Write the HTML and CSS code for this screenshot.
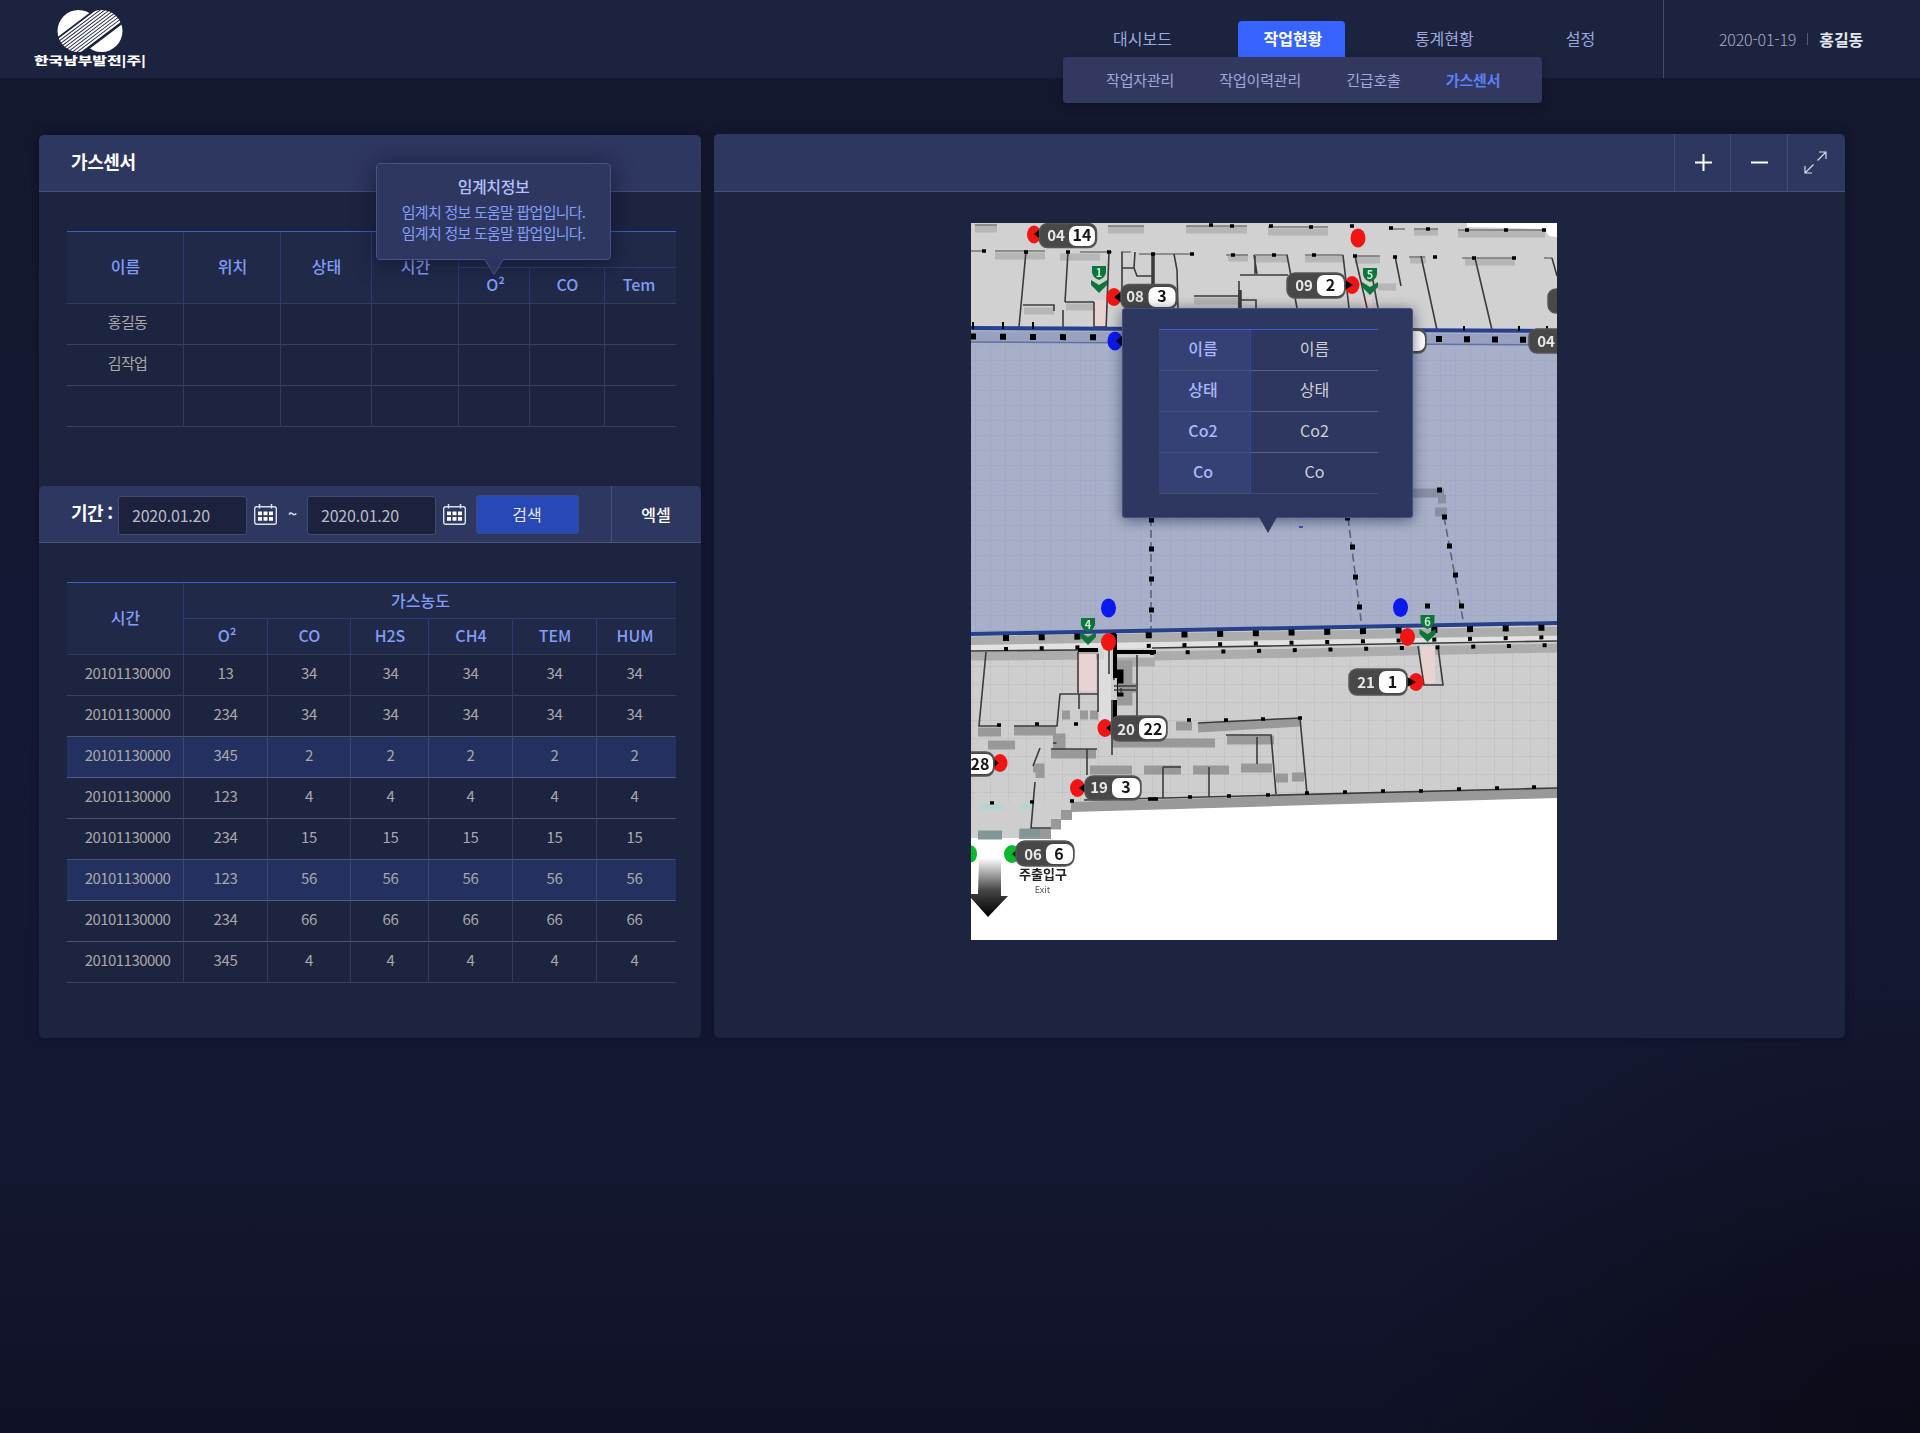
FILE: index.html
```html
<!DOCTYPE html>
<html lang="ko">
<head>
<meta charset="utf-8">
<title>가스센서</title>
<link rel="stylesheet" href="styles.css">
</head>
<body>
<header class="topbar">
  <svg class="logo" width="116" height="62" viewBox="32 8 116 62">
    <defs>
      <clipPath id="discs"><circle cx="78.500" cy="31" r="21"/><circle cx="101.500" cy="31" r="21"/></clipPath>
      <clipPath id="left-disc"><circle cx="78.500" cy="31" r="21"/></clipPath>
      <clipPath id="right-disc"><circle cx="101.500" cy="31" r="21"/></clipPath>
    </defs>
    <path clip-path="url(#left-disc)" fill="#fff" d="M55 39 92 11V5H50z"/>
    <path clip-path="url(#right-disc)" fill="#fff" d="M88 50 125 22V60H88z"/>
    <g clip-path="url(#discs)" stroke="#fff" stroke-width="1.9">
      <path d="M50 46.200 130 -14.300M50 49.700 130 -10.800M50 53.200 130 -7.300M50 56.700 130 -3.800M50 60.200 130 -.3M50 63.700 130 3.200M50 67.200 130 6.700M50 70.700 130 10.200M50 74.200 130 13.700"/>
    </g>
    <text class="logo-text" transform="translate(34 65) scale(1 .88)" textLength="112" lengthAdjust="spacingAndGlyphs">한국남부발전|주|</text>
  </svg>
  <nav class="nav">
    <a class="nav-item">대시보드</a>
    <a class="nav-item nav-active">작업현황</a>
    <a class="nav-item nav-stats">통계현황</a>
    <a class="nav-item">설정</a>
  </nav>
  <div class="user"><span class="date">2020-01-19</span><i class="user-bar"></i><b class="user-name">홍길동</b></div>
  <div class="submenu"><a>작업자관리</a><a>작업이력관리</a><a>긴급호출</a><a class="submenu-active">가스센서</a></div>
</header>

<main class="main">
  <section class="panel sensors">
    <div class="bar"><h2 class="bar-title">가스센서</h2></div>
    <div class="status-area">
      <table class="grid">
        <colgroup><col class="w117"><col class="w97"><col class="w91"><col class="w87"><col class="w71"><col class="w75"><col class="w71"></colgroup>
        <thead>
          <tr><th rowspan="2">이름</th><th rowspan="2">위치</th><th rowspan="2">상태</th><th rowspan="2">시간</th><th colspan="3"></th></tr>
          <tr><th>O²</th><th>CO</th><th>Tem</th></tr>
        </thead>
        <tbody>
          <tr><td class="who">홍길동</td><td></td><td></td><td></td><td></td><td></td><td></td></tr>
          <tr><td class="who">김작업</td><td></td><td></td><td></td><td></td><td></td><td></td></tr>
          <tr><td></td><td></td><td></td><td></td><td></td><td></td><td></td></tr>
        </tbody>
      </table>
    </div>
    <div class="bar filter">
      <span class="filter-label">기간 :</span>
      <div class="date-input">2020.01.20</div>
      <svg class="cal" width="23" height="21" viewBox="0 0 23 21"><use href="#calendar"/></svg>
      <span class="tilde">~</span>
      <div class="date-input">2020.01.20</div>
      <svg class="cal" width="23" height="21" viewBox="0 0 23 21">
        <g id="calendar"><rect x=".7" y="2.700" width="21.600" height="17.600" rx="2" fill="none" stroke="#dde0ee" stroke-width="1.400"/><path d="M5.500 0v4.500M17.500 0v4.500" stroke="#dde0ee" stroke-width="1.500"/><path fill="#fff" d="M4 7.500h4v3.700H4zM9.500 7.500h4v3.700h-4zM15 7.500h4v3.700h-4zM4 13h4v3.700H4zM9.500 13h4v3.700h-4zM15 13h4v3.700h-4z"/></g>
      </svg>
      <button class="search">검색</button>
      <a class="excel">엑셀</a>
    </div>
    <div class="history-area">
      <table class="grid">
        <colgroup><col class="w117"><col class="w84"><col class="w83"><col class="w78"><col class="w84"><col class="w84"><col class="w79"></colgroup>
        <thead>
          <tr><th rowspan="2">시간</th><th class="group" colspan="6">가스농도</th></tr>
          <tr><th>O²</th><th>CO</th><th>H2S</th><th>CH4</th><th>TEM</th><th>HUM</th></tr>
        </thead>
        <tbody>
          <tr><td class="time">20101130000</td><td>13</td><td>34</td><td>34</td><td>34</td><td>34</td><td>34</td></tr>
          <tr class="lit"><td class="time">20101130000</td><td>234</td><td>34</td><td>34</td><td>34</td><td>34</td><td>34</td></tr>
          <tr class="lit hot"><td class="time">20101130000</td><td>345</td><td>2</td><td>2</td><td>2</td><td>2</td><td>2</td></tr>
          <tr class="lit"><td class="time">20101130000</td><td>123</td><td>4</td><td>4</td><td>4</td><td>4</td><td>4</td></tr>
          <tr class="lit"><td class="time">20101130000</td><td>234</td><td>15</td><td>15</td><td>15</td><td>15</td><td>15</td></tr>
          <tr class="lit hot"><td class="time">20101130000</td><td>123</td><td>56</td><td>56</td><td>56</td><td>56</td><td>56</td></tr>
          <tr class="lit"><td class="time">20101130000</td><td>234</td><td>66</td><td>66</td><td>66</td><td>66</td><td>66</td></tr>
          <tr><td class="time">20101130000</td><td>345</td><td>4</td><td>4</td><td>4</td><td>4</td><td>4</td></tr>
        </tbody>
      </table>
    </div>
    <div class="tip">
      <strong class="tip-title">임계치정보</strong>
      <p class="tip-text">임계치 정보 도움말 팝업입니다.<br>임계치 정보 도움말 팝업입니다.</p>
      <svg class="tip-arrow" width="20" height="16" viewBox="0 0 20 16"><path d="M.5 0 10 15.500 19.500 0" fill="#2b355d" stroke="#47538a"/></svg>
    </div>
  </section>

  <section class="panel map-panel">
    <div class="bar tools">
      <a class="tool"><svg width="17" height="17" viewBox="0 0 17 17"><path d="M0 8.500h17M8.500 0v17" stroke="#fff" stroke-width="2"/></svg></a>
      <a class="tool"><svg width="17" height="17" viewBox="0 0 17 17"><path d="M0 8.500h17" stroke="#fff" stroke-width="2"/></svg></a>
      <a class="tool tool-wide"><svg width="23" height="23" viewBox="0 0 23 23"><path d="M13.500 9.500 22 1M15 1h7v7M9.500 13.500 1 22M1 15v7h7" fill="none" stroke="#d9dcec" stroke-width="1.200"/></svg></a>
    </div>
    <div class="map">
      <svg class="floor" width="586" height="717" viewBox="971 223 586 717">
        <defs>
          <linearGradient id="fade" x1="0" y1="0" x2="0" y2="1"><stop offset="0" stop-color="#fff"/><stop offset=".55" stop-color="#444"/><stop offset="1" stop-color="#000"/></linearGradient>
          <pattern id="tiles" width="15" height="15" patternUnits="userSpaceOnUse"><path d="M0 .5h15M.5 0v15" stroke="#8f9cc4" stroke-opacity=".3"/></pattern>
          <pattern id="tiles-gray" width="18" height="18" patternUnits="userSpaceOnUse"><path d="M0 .5h18M.5 0v18" stroke="#b0b0b0" stroke-opacity=".3"/></pattern>
          <g id="exit-sign"><path fill="#0d7539" d="M-7-13h14v6q0 5-7 8-7-3-7-8zM-8 1l8 5 8-5v5L0 14-8 6z"/></g>
        </defs>
        <path fill="#fff" d="M971 223h586v717H971z"/>
        <path fill="#d1d1d1" d="M971 223h586v110H971z"/>
        <path fill="#fff" d="M1467 223h90v14l-8-1-4-7-78-2z"/>
        <path fill="#a8b0c9" d="M971 328 1557 331V624L971 634z"/>
        <path fill="url(#tiles)" d="M971 345 1557 350V622L971 632z"/>
        <path fill="#cecece" d="M971 634 1557 624V791L1072 810V820H1061V830H1051V838H971z"/>
        <path fill="url(#tiles-gray)" d="M971 655 1557 645V790L1072 802H971z"/>

        <g class="plan">
          <g stroke="#b6b6b6" stroke-width="7">
            <path d="M975 229h22M1108 230h36M1186 230h61M1268 232h60M1414 232h24M1458 234h87M995 256h50M1060 257h40M1228 258h20M1254 259h34M1305 259h38M1355 260h25M1410 260h16M1465 262h50M1194 301h44M1024 311h30M1066 307h30M1378 287h18"/>
            <path stroke="#acacac" d="M971 641 1557 631M971 656 1104 655M1154 656 1557 648M1113 662h42" stroke-width="9"/>
          </g>
          <path d="M971 648 1557 639" stroke="#e2e2e2" stroke-width="6"/>
          <path d="M971 337 1557 340" stroke="#98a1bf" stroke-width="11"/>
          <g stroke="#999" stroke-width="9">
            <path d="M978 732h23M1014 731h42M988 745h27M1053 738h8v10h-8M1051 754h45M1176 726h16M1198 728 1300 722M1112 743h103M1227 740h47M1144 770h37M1193 770h36M1241 768h31M1276 778h12M1292 777h12M1090 770h42M1117 665h11v36h-11M1118 688h18M1062 715h8M1080 715h8M1090 715h8M1033 768h7v10"/>
            <path d="M1071 807 1557 793M1019 834h32M1051 824h10M1061 815h11" stroke-width="10"/>
            <path d="M978 835h24M1020 833h20" stroke="#819797"/>
            <path d="M1412 493h32M1438 499h8M1435 512h12" stroke="#888fa4"/>
          </g>
          <path fill="#e9d2d2" d="M1094 300h13v26h-13zM1078 654h18v37h-18zM1420 646h15v37h-12zM1361 297h11v11h-11z"/>
          <path fill="#e4e4e4" d="M1099 650h12v75h-12z" opacity=".7"/>

          <g fill="none" stroke="#3b3b3b" stroke-width="1.600">
            <path stroke="#777" d="M975 225h22M1108 226h36M1186 226h61M1268 227h60M1389 229h16M1414 229h24M1458 230h87M971 251h13M995 251h50M1080 252h32M1121 252h10M1139 254h54M1226 255h22M1254 255h34M1305 255h38M1354 256h26M1409 257h16M1462 258h53M1544 258h8"/>
            <path d="M1026 251 1019 327M1068 252 1065 302M1109 252 1106 330M1094 302v25h12M1065 302h29M1023 305h31v6M1063 310v20M1122 252v42M1122 268h12l1-16M1134 268l3 8h16M1174 254l3 16 1 40M1254 255l3 19M1240 275h48M1287 255l10 53M1239 281v27M1194 296h46M1240 300h16v8M1343 255l6 53M1355 256l12 52M1372 275l6 33M1395 256l6 30M1421 256l16 74M1475 258l17 72M1552 258l5 18M1255 256v18"/>
            <path stroke-width="3.500" d="M1153 254v42M1240 290v18"/>
            <path d="M986 652 979 726H1001M1014 726h43l3-32h38v-40M1078 652v41M1098 660v52M1079 694v15M1114 660v20M1114 690h22M1137 655v62M1112 700v26M1121 688v4M1114 686h22M1051 749h46M1087 749v26M1040 748l-7 18M1035 782l-4 46h20M1198 723 1300 718l7 76M1226 735h45l5 59M1257 737v27M1163 767v31M1209 767v30M1163 767h18M1112 735v20M1084 800 1557 788M1109 650v24M1418 646l6 39h19l-5-38M971 651 1078 650M1152 648 1557 641"/>
            <path stroke="#000" stroke-width="4" d="M1078 650h20M1114 652h42M1115 634v44M1115 700v25"/>
            <path stroke="#5a637c" stroke-dasharray="8 4" d="M1151 518v112M1348 518l14 110M1444 517l20 108"/>
          </g>
          <g stroke="#26408c" stroke-width="4"><path d="M971 328 1557 331M971 634 1557 623"/><path stroke-width="1.500" stroke="#6071a4" d="M971 342 1557 345"/></g>

          <g fill="none" stroke="#000" stroke-width="5">
            <path stroke-width="6" stroke-dasharray="6 24" d="M970 336.500 1120 337.500"/><path stroke-width="6" stroke-dasharray="6 22" d="M1436 339 1540 340"/>
            <path stroke-width="6" stroke-dasharray="6 29.700" d="M1003 638 1557 627.500"/>
            <path stroke-width="4" stroke-dasharray="4 31.700" d="M1004 649 1557 637M1150 653 1557 645"/>
            <path d="M1149 520h5M1149 549h5M1149 579h5M1149 610h5M1345 518h5M1350 547h5M1353 577h5M1357 607h5M1442 517h5M1447 546h5M1453 575h5M1459 606h5M1437 490h5M1425 606h5"/>
            <path stroke-width="3.500" d="M982 251h4M1024 252h4M1066 252h4M1107 252h4M1151 254h4M1190 254h4M1231 255h4M1272 255h4M1312 255h4M1353 256h4M1393 257h4M1433 257h4M1472 258h4M1512 258h4M1209 225h4M1230 226h4M1269 226h4M1309 227h4M1350 226h4M1389 228h4M1426 229h4M1465 230h4M1504 230h4M1542 230h4M997 725h4M1035 724h4M1074 724h4M1187 720h4M1224 720h4M1261 719h4M1298 718h4M990 803h4M1030 802h4M1070 801h4M1148 799h10M1188 797h4M1227 796h4M1266 795h4M1305 793h4M1343 792h4M1381 791h4M1419 791h4M1457 789h4M1495 788h4M1532 787h4"/>
            <path stroke-width="2" d="M973 322v7M1003 322v7M1033 322v7M1464 326v5M1519 326v5M1547 326v5"/>
          </g>
          <path stroke="#a7d8d8" stroke-width="5" opacity=".6" d="M980 807h24M1020 806h12"/>
          <path stroke="#3d50c4" stroke-width="2" d="M1299 527h4"/>

          <g fill="#f01414"><ellipse cx="1034" cy="234.500" rx="7" ry="9"/><ellipse cx="1358" cy="238" rx="7.500" ry="9.500"/><ellipse cx="1114" cy="297" rx="7.500" ry="9"/><ellipse cx="1352" cy="285" rx="7.500" ry="9"/><ellipse cx="1108.500" cy="642" rx="7.500" ry="9"/><ellipse cx="1407.500" cy="637" rx="7.500" ry="9"/><ellipse cx="1416" cy="682" rx="7.500" ry="9"/><ellipse cx="1105" cy="728" rx="7.500" ry="9"/><ellipse cx="1000" cy="763" rx="7.500" ry="9"/><ellipse cx="1077.500" cy="788" rx="7.500" ry="9"/></g>
          <g fill="#0b18ee"><ellipse cx="1115" cy="341" rx="7.500" ry="9.500"/><ellipse cx="1108.500" cy="608" rx="7.500" ry="9.500"/><ellipse cx="1400.500" cy="607.500" rx="7.500" ry="9.500"/></g>
          <g fill="#08b92c"><ellipse cx="971" cy="854" rx="6" ry="8.500"/><ellipse cx="1012" cy="854" rx="8" ry="9"/></g>
          <path fill="#000" d="m1034 234 6-5v10zM1114 297l8-6v12zM1116 341l8-7v14zM1353 285l-8-5v10zM1416 682l-9-5v10zM1106 728l8-6v12zM999 763l-6-5v10zM1079 788l8-6v12zM1012 854l7-6v12z"/>

          <use href="#exit-sign" x="1099" y="279"/><use href="#exit-sign" x="1370" y="281"/><use href="#exit-sign" x="1088" y="631"/><use href="#exit-sign" x="1427.500" y="628"/>
          <g class="sign-no"><text x="1099" y="277">1</text><text x="1370" y="279">5</text><text x="1088" y="629">4</text><text x="1427.500" y="626">6</text></g>

          <g fill="#484848" stroke="#555" stroke-width="1.500">
            <rect x="1039.500" y="223.500" width="57" height="24" rx="8"/><rect x="1121" y="284.500" width="56" height="24" rx="8"/><rect x="1287" y="273" width="58" height="25" rx="8"/><rect x="1349" y="669" width="58" height="26" rx="8"/><rect x="1111" y="716" width="56" height="25" rx="8"/><rect x="944" y="752" width="50" height="24" rx="8"/><rect x="1085" y="776" width="56" height="24" rx="8"/><rect x="1016" y="841" width="58" height="25" rx="9"/><rect x="1380" y="329" width="46" height="24" rx="8"/><rect x="1529" y="329" width="50" height="24" rx="8"/><rect x="1548" y="289" width="30" height="24" rx="8"/>
          </g>
          <g fill="#fff">
            <rect x="1069" y="226" width="26" height="20" rx="7"/><rect x="1148.500" y="287" width="27" height="20" rx="7"/><rect x="1317" y="275" width="27" height="21" rx="7"/><rect x="1379" y="671" width="27" height="22" rx="7"/><rect x="1139" y="718" width="27" height="21" rx="7"/><rect x="960" y="754" width="33" height="20" rx="7"/><rect x="1112" y="778" width="28" height="20" rx="7"/><rect x="1046" y="844" width="27" height="20" rx="7"/><rect x="1398" y="331" width="27" height="20" rx="7"/>
          </g>
          <g class="badge-id"><text x="1056" y="241">04</text><text x="1135" y="302">08</text><text x="1304" y="291">09</text><text x="1366" y="688">21</text><text x="1126" y="735">20</text><text x="1099" y="793">19</text><text x="1033" y="860">06</text><text x="1546" y="347">04</text></g>
          <g class="badge-no"><text x="1082" y="241">14</text><text x="1162" y="302">3</text><text x="1330.500" y="291">2</text><text x="1392.500" y="688">1</text><text x="1153" y="735">22</text><text x="980" y="770">28</text><text x="1126" y="793">3</text><text x="1059" y="860">6</text></g>
          <path fill="url(#fade)" d="M979 858h22v38h7l-20 21-17-19v-4h7z"/>
          <text class="exit-ko" x="1043" y="879">주출입구</text>
          <text class="exit-en" x="1042.500" y="893">Exit</text>
        </g>
      </svg>
      <div class="pop">
        <table class="pop-table">
          <tr><th>이름</th><td>이름</td></tr>
          <tr><th>상태</th><td>상태</td></tr>
          <tr><th>Co2</th><td>Co2</td></tr>
          <tr class="last"><th>Co</th><td>Co</td></tr>
        </table>
      </div>
    </div>
  </section>
</main>
</body>
</html>
```

FILE: styles.css
```css
* { box-sizing: border-box; }

body {
  margin: 0;
  width: 1920px;
  height: 1433px;
  overflow: hidden;
  background:
    radial-gradient(ellipse 560px 480px at 100% 100%, rgba(8, 9, 18, .7), rgba(8, 9, 18, 0) 100%),
    linear-gradient(180deg, #14182e 0, #141834 45%, #141731 80%, #0f1226 100%);
  font-family: "Noto Sans CJK KR", "Noto Sans", sans-serif;
  font-size: 16px;
  line-height: 24px;
  color: #fff;
}

a { color: inherit; text-decoration: none; }

/* top bar */
.topbar {
  position: relative;
  z-index: 2;
  display: flex;
  height: 78px;
  background: #1c233f;
}

.logo { margin: 8px 0 0 32px; }
.logo-text { font-size: 13px; font-weight: 900; fill: #fff; }

.nav {
  display: flex;
  align-items: flex-start;
  width: 1516px;
  padding: 21px 0 0 965px;
  border-right: 1px solid #454c6c;
  color: #9fa8de;
}

.nav-item { height: 36px; line-height: 35px; white-space: nowrap; }
.nav-active {
  width: 107px;
  margin: 0 70px 0 66px;
  padding-left: 3px;
  border-radius: 4px 4px 0 0;
  background: #3763ff;
  color: #fff;
  font-weight: 700;
  text-align: center;
}
.nav-stats { margin-right: 92px; }

.user {
  display: flex;
  align-items: center;
  padding: 0 0 1px 55px;
  color: #a9adc8;
  font-weight: 300;
}
.date { letter-spacing: -.2px; }
.user-bar { width: 1px; height: 12px; margin: 0 11px 0 11px; background: #555b7a; }
.user-name { color: #e4e6ef; font-weight: 700; }

.submenu {
  position: absolute;
  left: 1063px;
  top: 57px;
  display: flex;
  gap: 45px;
  width: 479px;
  height: 46px;
  padding-left: 43px;
  border-radius: 4px;
  background: #33395e;
  box-shadow: 0 3px 8px rgba(0, 0, 0, .25);
  color: #9fa8de;
  font-size: 15px;
  line-height: 46px;
  letter-spacing: -.15px;
}
.submenu-active { color: #5b80fb; font-weight: 700; }

/* panels */
.main { display: flex; gap: 13px; padding: 56px 0 0 39px; }

.panel {
  position: relative;
  border-radius: 5px;
  background: #1d2440;
  box-shadow: 0 0 10px rgba(5, 8, 20, .35);
}
.sensors { width: 662px; height: 903px; margin-top: 1px; }
.map-panel { width: 1131px; height: 904px; }

.bar {
  display: flex;
  height: 57px;
  border-bottom: 1px solid #47507c;
  border-radius: 5px 5px 0 0;
  background: #2e3760;
}
.bar-title { margin: 0; padding-left: 32px; font-size: 18px; font-weight: 700; line-height: 53px; letter-spacing: -.4px; }

.status-area { height: 294px; padding: 39px 0 0 28px; }
.history-area { padding: 39px 0 0 28px; }

/* data tables */
.grid {
  width: 609px;
  table-layout: fixed;
  border-collapse: separate;
  border-spacing: 0;
  border-top: 1px solid #3a5fd0;
  text-align: center;
}
.w117 { width: 117px; } .w97 { width: 97px; } .w91 { width: 91px; } .w87 { width: 87px; }
.w84 { width: 84px; } .w83 { width: 83px; } .w79 { width: 79px; } .w78 { width: 78px; }
.w75 { width: 75px; } .w71 { width: 71px; }

.grid th {
  height: 36px;
  padding: 0 0 4px 1px;
  border-right: 1px solid #2a3b7b;
  border-bottom: 1px solid #2a3b7b;
  background: #212949;
  color: #829cf8;
  font-weight: 500;
}
.grid th[rowspan], .grid thead tr:last-child th { border-bottom-color: #353c55; }
.grid thead tr:last-child th:first-child { padding-left: 3px; }
.grid th:last-child, .grid td:last-child { border-right-color: transparent; padding-right: 3px; }
.grid th.group { padding: 0 19px 1px 1px; }
.grid td {
  height: 41px;
  padding: 0 0 4px;
  border-right: 1px solid rgba(255, 255, 255, .11);
  border-bottom: 1px solid rgba(255, 255, 255, .13);
  color: #a8a8a8;
  font-size: 15px;
  letter-spacing: -.3px;
}
.grid td:nth-child(4) { padding-left: 2px; }
.grid .time { padding-left: 5px; letter-spacing: -.55px; }
.grid .who { padding-left: 5px; letter-spacing: -.6px; }
.lit td { border-bottom-color: rgba(255, 255, 255, .22); }
.hot td { background: #243160; }

/* period filter */
.filter { align-items: center; padding-left: 32px; border-bottom-color: #4c5478; }
.filter-label { width: 47px; padding-bottom: 4px; font-size: 18px; font-weight: 700; letter-spacing: -.6px; white-space: nowrap; }
.date-input {
  width: 129px;
  height: 39px;
  margin-top: 2px;
  padding-left: 13px;
  border: 1px solid #434a6b;
  border-radius: 3px;
  background: #1c223e;
  color: #b8bac2;
  line-height: 37px;
  letter-spacing: -.2px;
}
.cal { margin: 0 0 0 7px; }
.tilde { width: 30px; padding: 0 0 3px 11px; color: #e0e2ec; font-weight: 500; }
.search {
  width: 103px;
  height: 39px;
  margin: 1px 0 0 10px;
  padding: 0 1px 2px 0;
  border: 1px solid #3c4a86;
  border-radius: 3px;
  background: #2848b6;
  color: #e3e6f5;
  font: inherit;
}
.excel {
  align-self: stretch;
  width: 90px;
  margin-left: auto;
  padding-right: 1px;
  border-left: 1px solid #474f78;
  line-height: 56px;
  text-align: center;
  font-weight: 500;
}

/* threshold tooltip */
.tip {
  position: absolute;
  left: 337px;
  top: 28px;
  width: 235px;
  height: 97px;
  padding-top: 10px;
  border: 1px solid #47538a;
  border-radius: 4px;
  background: #2e3760;
  box-shadow: 0 2px 22px rgba(10, 14, 35, .6);
  text-align: center;
}
.tip-title { display: block; color: #b3c0ff; font-weight: 500; letter-spacing: -.4px; }
.tip-text { margin: 3px 0 0; color: #849efb; font-size: 15px; line-height: 21px; letter-spacing: -.75px; }
.tip-arrow { position: absolute; left: 107px; top: 95px; }

/* map tools */
.tools { height: 58px; justify-content: flex-end; }
.tool {
  display: flex;
  align-items: center;
  justify-content: center;
  width: 57px;
  border-left: 1px solid #434b76;
}
.tool:first-child { width: 56px; padding-left: 1px; }
.tool-wide { width: 58px; padding-right: 2px; }

.map { position: relative; width: 586px; height: 717px; margin: 31px 0 0 257px; }
.floor { display: block; }
.plan { filter: blur(.6px); }

.badge-id, .badge-no, .sign-no, .exit-ko, .exit-en {
  font-family: "Noto Sans CJK KR", sans-serif;
  font-weight: 700;
  text-anchor: middle;
}
.badge-id { font-size: 15px; fill: #e8e8e8; }
.badge-no { font-size: 16px; fill: #151515; }
.sign-no { font-size: 11px; fill: #cfe8d8; }
.exit-ko { font-size: 13px; fill: #222; }
.exit-en { font-size: 9px; font-weight: 400; fill: #555; }

.pop {
  position: absolute;
  left: 151px;
  top: 85px;
  width: 291px;
  height: 210px;
  padding: 20px 0 0 36px;
  border: 1px solid #47507c;
  border-radius: 3px;
  background: #2e3760;
  box-shadow: 0 2px 14px rgba(20, 26, 60, .6);
}
.pop::after {
  content: "";
  position: absolute;
  left: 136px;
  top: 208px;
  border: solid transparent;
  border-width: 16px 9px 0;
  border-top-color: #2e3760;
}
.pop-table { width: 219px; border-spacing: 0; border-top: 1px solid #3a5fd8; table-layout: fixed; text-align: center; }
.pop-table th, .pop-table td { height: 41px; padding: 0 0 4px; border-bottom: 1px solid #5a6280; }
.pop-table th {
  width: 92px;
  padding-right: 3px;
  border-right: 1px solid #34479a;
  border-bottom-color: #454e7b;
  background: #354174;
  color: #aab8fc;
  font-weight: 500;
}
.pop-table td { color: #cfd0d4; }
.pop-table .last td, .pop-table .last th { border-bottom-color: #434b70; }
```
